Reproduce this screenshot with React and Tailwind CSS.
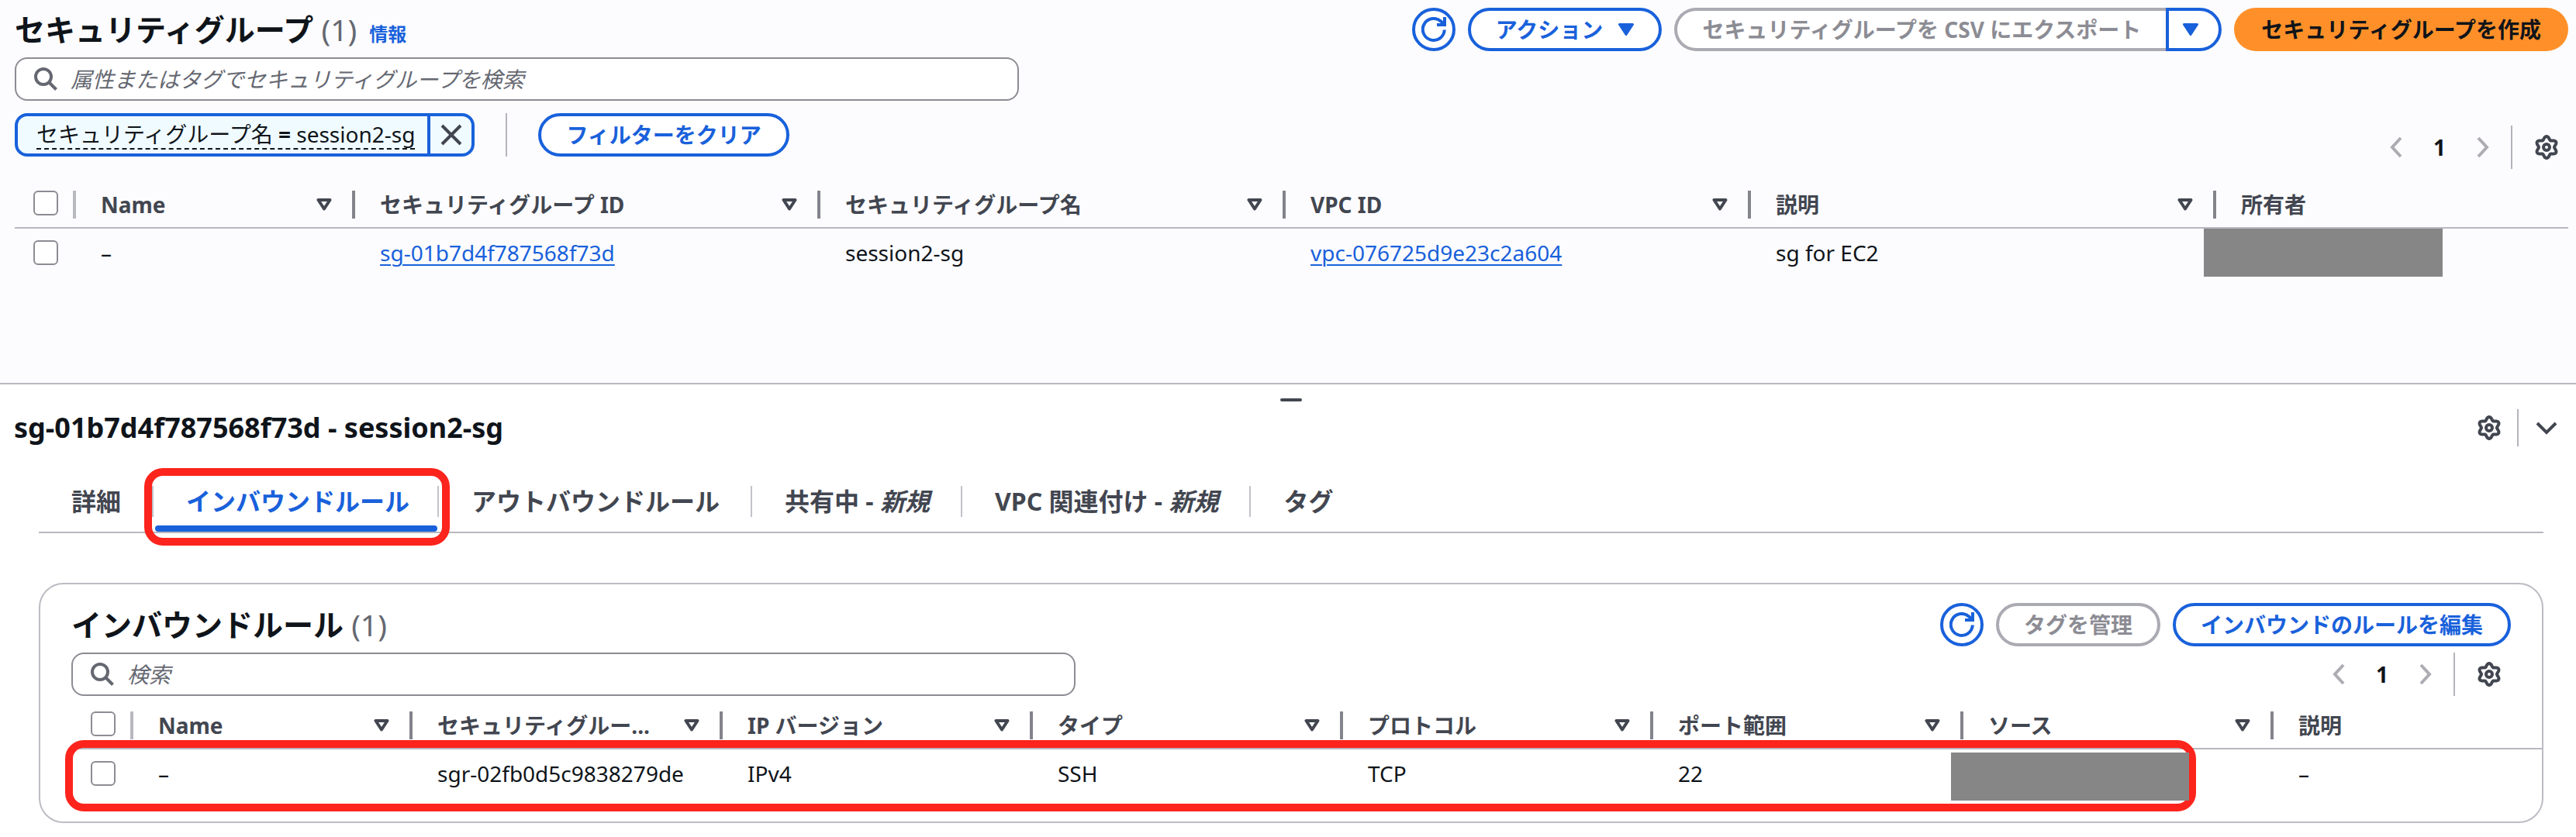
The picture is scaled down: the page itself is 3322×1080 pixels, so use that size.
import React from "react";

const TOP_COLUMNS = ["Name", "セキュリティグループ ID", "セキュリティグループ名", "VPC ID", "説明", "所有者"];
const RULE_COLUMNS = ["Name", "セキュリティグルー...", "IP バージョン", "タイプ", "プロトコル", "ポート範囲", "ソース", "説明"];

function SearchIcon() {
  return (
    <svg viewBox="0 0 32 32" className="size-8 shrink-0" fill="none" stroke="#656871" strokeWidth="4" aria-hidden="true">
      <circle cx="13" cy="13" r="10" />
      <path d="M20 20l9.500 9.500" />
    </svg>
  );
}

function RefreshIcon() {
  return (
    <svg viewBox="0 0 32 32" className="size-8" fill="none" stroke="currentColor" strokeWidth="4" aria-hidden="true">
      <path d="M29.800 16.500A14 14 0 1 1 25.500 5.800L30 10" />
      <path d="M30 0v10H20" />
    </svg>
  );
}

// Six-lobed cog outline, sampled around a circle.
const GEAR_POINTS = Array.from({ length: 96 }, (_, i) => {
  const a = (i / 96) * Math.PI * 2;
  const r = 12 + 2 * Math.cos(6 * a);
  return `${(16 + r * Math.sin(a)).toFixed(2)},${(16 - r * Math.cos(a)).toFixed(2)}`;
}).join(" ");

function GearIcon() {
  return (
    <svg viewBox="0 0 32 32" className="size-8" fill="none" stroke="#424650" strokeWidth="4" strokeLinejoin="round" aria-hidden="true">
      <polygon points={GEAR_POINTS} />
      <circle cx="16" cy="16" r="4" />
    </svg>
  );
}

function CaretDown() {
  return (
    <svg viewBox="0 0 20 16" className="h-4 w-5" fill="currentColor" stroke="currentColor" strokeWidth="3" strokeLinejoin="round" aria-hidden="true">
      <path d="M1.500 1.500h17L10 14.500z" />
    </svg>
  );
}

function SortIcon() {
  return (
    <svg viewBox="0 0 20 16" className="h-4 w-5 shrink-0" fill="none" stroke="#424650" strokeWidth="4" strokeLinejoin="round" aria-hidden="true">
      <path d="M2.500 2h15L10 13.500z" />
    </svg>
  );
}

function Chevron({ d }) {
  return (
    <svg viewBox="0 0 16 28" className="h-7 w-4" fill="none" stroke="#acacb3" strokeWidth="4" aria-hidden="true">
      <path d={d} />
    </svg>
  );
}

function Pagination() {
  return (
    <div className="flex h-14 shrink-0 items-center">
      <button aria-label="前のページ" disabled><Chevron d="M14 2L3 14l11 12" /></button>
      <button className="w-24 text-center font-bold" aria-current="page">1</button>
      <button aria-label="次のページ" disabled><Chevron d="M2 2l11 12L2 26" /></button>
      <span className="ml-7 h-full w-[2px] bg-[#b4b4bb]" />
      <button className="ml-7" aria-label="設定"><GearIcon /></button>
    </div>
  );
}

function Search({ label }) {
  return (
    <label className="flex h-14 w-[1295px] shrink-0 items-center gap-4 rounded-2xl border-2 border-[#8c8c94] bg-white pl-[22px]">
      <SearchIcon />
      <input type="search" aria-label={label} placeholder={label} className="min-w-0 flex-1 bg-transparent italic outline-none placeholder:text-[#656871]" />
    </label>
  );
}

function Check({ label }) {
  return (
    <input type="checkbox" aria-label={label} className="block size-8 appearance-none rounded-md border-2 border-[#8c8c94] bg-white" />
  );
}

function HeaderCell({ children, last }) {
  return (
    <th scope="col" className="p-0 text-left align-top font-bold text-[#424650]">
      <div className={last ? "flex h-9 items-center pl-8" : "flex h-9 items-center gap-5 border-r-4 border-[#83838c] pr-[26px] pl-8"}>
        <span className="flex-1 whitespace-nowrap">{children}</span>
        {!last && <SortIcon />}
      </div>
    </th>
  );
}

function Cell({ children }) {
  return <td className="py-0 pr-0 pl-8 align-middle whitespace-nowrap">{children}</td>;
}

const outline = "flex h-14 shrink-0 items-center rounded-full border-4 bg-white px-8 font-bold whitespace-nowrap";

function Refresh() {
  return (
    <button aria-label="更新" className="flex size-14 shrink-0 items-center justify-center rounded-full border-4 border-[#1961db] bg-white text-[#1961db]">
      <RefreshIcon />
    </button>
  );
}

function Tab({ children, active, last }) {
  return (
    <li className="relative flex h-[78px] items-center">
      <button
        role="tab"
        aria-selected={!!active}
        className={`h-full pl-[42px] font-bold ${active ? "pr-9 text-[#1961db]" : "pr-10 text-[#424650]"}`}
      >
        {children}
      </button>
      {!last && <span className="h-10 w-[2px] bg-[#c2c2ca]" />}
      {active && (
        <>
          <span className="absolute right-[2px] bottom-0 left-[2px] h-2 rounded-full bg-[#1961db]" />
          <span className="absolute -top-1 -right-3.5 -bottom-[18px] -left-3 rounded-3xl border-[10px] border-[#fc241c]" />
        </>
      )}
    </li>
  );
}

export default function App() {
  return (
    <div className="min-h-screen bg-[#fcfcfe] font-['Noto_Sans','Noto_Sans_CJK_JP',sans-serif] text-[28px] leading-10 text-[#0f141a]">
      <section className="h-[494px] pt-[10px] pr-[10px] pl-[19px]">
        <header className="flex h-14 items-center gap-4">
          <h1 className="flex-1 text-[39px] leading-14 font-bold whitespace-nowrap">
            セキュリティグループ <span className="font-normal text-[#656871]">(1)</span>
            <a href="#info" className="ml-4 text-2xl font-bold text-[#1961db]">情報</a>
          </h1>
          <Refresh />
          <button className={`${outline} gap-5 border-[#1961db] text-[#1961db]`}>アクション <CaretDown /></button>
          <div className="flex">
            <button disabled className="flex h-14 items-center rounded-l-full border-4 border-r-0 border-[#aaaab2] bg-white px-8 font-bold whitespace-nowrap text-[#8c8c94]">
              セキュリティグループを CSV にエクスポート
            </button>
            <button aria-label="エクスポートオプション" className="flex h-14 w-[72px] items-center rounded-r-full border-4 border-[#1961db] bg-white pl-[18px] text-[#1961db]">
              <CaretDown />
            </button>
          </div>
          <button className="h-14 rounded-full bg-[#ff9029] px-[35px] font-bold whitespace-nowrap">セキュリティグループを作成</button>
        </header>

        <div className="mt-2 flex"><Search label="属性またはタグでセキュリティグループを検索" /></div>

        <div className="mt-4 flex items-start justify-between">
          <div className="flex items-center">
            <div className="flex h-14 items-stretch overflow-hidden rounded-2xl border-4 border-[#1961db] bg-[#f0fbff]">
              <button className="flex items-center pr-4 pl-6 whitespace-nowrap">
                <span className="border-b-2 border-dashed border-[#0f141a] leading-9">セキュリティグループ名 <b>=</b> session2-sg</span>
              </button>
              <button aria-label="フィルターを削除" className="flex w-[57px] items-center justify-center border-l-4 border-[#1961db]">
                <svg viewBox="0 0 32 32" className="size-8" fill="none" stroke="#424650" strokeWidth="4" aria-hidden="true"><path d="M4 4l24 24M28 4L4 28" /></svg>
              </button>
            </div>
            <span className="ml-10 h-14 w-[2px] bg-[#b4b4bb]" />
            <button className={`${outline} ml-10 border-[#1961db] text-[#1961db]`}>フィルターをクリア</button>
          </div>
          <div className="mt-4 pr-3"><Pagination /></div>
        </div>

        <table className="mt-7 w-full table-fixed border-collapse">
          <colgroup>
            <col className="w-[79px]" /><col className="w-[360px]" /><col className="w-[600px]" /><col className="w-[600px]" /><col className="w-[600px]" /><col className="w-[600px]" /><col />
          </colgroup>
          <thead>
            <tr className="h-12 border-b-2 border-[#b8b8c0]">
              <th className="p-0 align-top"><div className="h-9 border-r-4 border-[#b8b8c0] pl-6"><Check label="すべて選択" /></div></th>
              {TOP_COLUMNS.map((c, i) => <HeaderCell key={c} last={i === 5}>{c}</HeaderCell>)}
            </tr>
          </thead>
          <tbody>
            <tr className="h-[62px]">
              <td className="p-0 pl-6"><Check label="session2-sg を選択" /></td>
              <Cell>–</Cell>
              <Cell><a href="#sg" className="text-[#1961db] underline decoration-2 underline-offset-4">sg-01b7d4f787568f73d</a></Cell>
              <Cell>session2-sg</Cell>
              <Cell><a href="#vpc" className="text-[#1961db] underline decoration-2 underline-offset-4">vpc-076725d9e23c2a604</a></Cell>
              <Cell>sg for EC2</Cell>
              <td className="relative p-0"><div className="absolute top-0 -left-4 h-[62px] w-[308px] bg-[#868686]" /></td>
            </tr>
          </tbody>
        </table>
      </section>

      <section className="min-h-[586px] border-t-2 border-[#b8b8c0] bg-white">
        <div className="flex h-8 items-center justify-center pt-2 pl-2">
          <button aria-label="パネルのサイズを変更" className="h-1 w-7 rounded-full bg-[#424650]" />
        </div>
        <header className="flex h-12 items-center pr-[22px] pl-[18px]">
          <h2 className="flex-1 text-4xl font-bold">sg-01b7d4f787568f73d - session2-sg</h2>
          <button aria-label="パネル設定"><GearIcon /></button>
          <span className="mx-5 h-full w-[2px] bg-[#b4b4bb]" />
          <button aria-label="パネルを閉じる">
            <svg viewBox="0 0 32 32" className="size-8" fill="none" stroke="#424650" strokeWidth="4" aria-hidden="true"><path d="M4 10l12 12 12-12" /></svg>
          </button>
        </header>

        <div className="mr-[42px] ml-[50px]">
          <ul role="tablist" className="mt-8 flex border-b-2 border-[#b8b8c0] text-[32px] whitespace-nowrap">
            <Tab>詳細</Tab>
            <Tab active>インバウンドルール</Tab>
            <Tab>アウトバウンドルール</Tab>
            <Tab>共有中 - <i>新規</i></Tab>
            <Tab>VPC 関連付け - <i>新規</i></Tab>
            <Tab last>タグ</Tab>
          </ul>

          <div className="mt-16 h-[310px] rounded-[32px] border-2 border-[#bcbcc4] pt-6 pl-10">
            <div className="flex h-14 items-center gap-4 pr-10">
              <h3 className="flex-1 text-[39px] leading-14 font-bold">インバウンドルール <span className="font-normal text-[#656871]">(1)</span></h3>
              <Refresh />
              <button disabled className={`${outline} border-[#aaaab2] text-[#8c8c94]`}>タグを管理</button>
              <button className={`${outline} border-[#1961db] text-[#1961db]`}>インバウンドのルールを編集</button>
            </div>
            <div className="mt-2 flex justify-between pr-[52px]">
              <Search label="検索" />
              <Pagination />
            </div>
            <div className="relative mt-5">
              <table className="w-full table-fixed border-collapse">
                <colgroup>
                  <col className="w-20" /><col className="w-[360px]" /><col className="w-[400px]" /><col className="w-[400px]" /><col className="w-[400px]" /><col className="w-[400px]" /><col className="w-[400px]" /><col className="w-[400px]" /><col />
                </colgroup>
                <thead>
                  <tr className="h-12 border-b-2 border-[#b8b8c0]">
                    <th className="p-0 align-top"><div className="h-9 border-r-4 border-[#b8b8c0] pl-[25px]"><Check label="すべてのルールを選択" /></div></th>
                    {RULE_COLUMNS.map((c, i) => <HeaderCell key={c} last={i === 7}>{c}</HeaderCell>)}
                  </tr>
                </thead>
                <tbody>
                  <tr className="h-[62px]">
                    <td className="p-0 pl-[25px]"><Check label="ルールを選択" /></td>
                    <Cell>–</Cell>
                    <Cell>sgr-02fb0d5c9838279de</Cell>
                    <Cell>IPv4</Cell>
                    <Cell>SSH</Cell>
                    <Cell>TCP</Cell>
                    <Cell>22</Cell>
                    <td className="relative p-0"><div className="absolute top-1 -left-4 z-10 h-[62px] w-[307px] bg-[#868686]" /></td>
                    <Cell>–</Cell>
                  </tr>
                </tbody>
              </table>
              <div className="pointer-events-none absolute top-[37px] -left-2 h-[92px] w-[2748px] rounded-3xl border-[10px] border-[#fc241c]" />
            </div>
          </div>
        </div>
      </section>
    </div>
  );
}
